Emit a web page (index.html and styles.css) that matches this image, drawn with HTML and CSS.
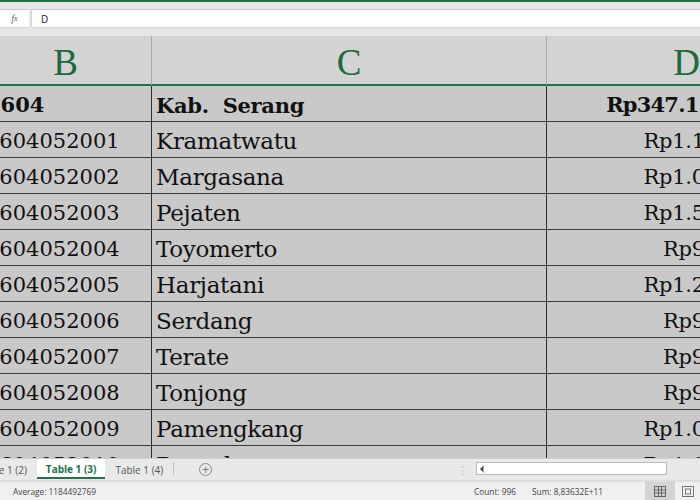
FILE: index.html
```html
<!DOCTYPE html>
<html>
<head>
<meta charset="utf-8">
<link rel="stylesheet" href="styles.css">
</head>
<body>
<div class="app">
  <div class="topband"></div>
  <div class="formula">
    <div class="fx">f<span class="x">x</span></div>
    <div class="field">D</div>
  </div>
  <div class="gap"></div>
  <div class="sheet">
    <div class="grid">
      <div class="hd">B</div><div class="hd">C</div><div class="hd">D</div>
      <div class="c b bold">3604</div><div class="c t bold">Kab.&nbsp; Serang</div><div class="c n bold">Rp347.153.248.000</div>
      <div class="c b">3604052001</div><div class="c t">Kramatwatu</div><div class="c n">Rp1.123.456.000</div>
      <div class="c b">3604052002</div><div class="c t">Margasana</div><div class="c n">Rp1.045.873.000</div>
      <div class="c b">3604052003</div><div class="c t">Pejaten</div><div class="c n">Rp1.512.904.000</div>
      <div class="c b">3604052004</div><div class="c t">Toyomerto</div><div class="c n">Rp978.312.000</div>
      <div class="c b">3604052005</div><div class="c t">Harjatani</div><div class="c n">Rp1.256.640.000</div>
      <div class="c b">3604052006</div><div class="c t">Serdang</div><div class="c n">Rp965.221.000</div>
      <div class="c b">3604052007</div><div class="c t">Terate</div><div class="c n">Rp951.084.000</div>
      <div class="c b">3604052008</div><div class="c t">Tonjong</div><div class="c n">Rp987.530.000</div>
      <div class="c b">3604052009</div><div class="c t">Pamengkang</div><div class="c n">Rp1.034.118.000</div>
      <div class="c b">3604052010</div><div class="c t">Pancalaran</div><div class="c n">Rp1.142.760.000</div>
    </div>
  </div>
  <div class="tabs">
    <div class="tab">Table 1 (2)</div>
    <div class="tab active">Table 1 (3)</div>
    <div class="tab">Table 1 (4)</div>
    <div class="tsep"></div>
    <div class="plus">+</div>
    <div class="dots">⋮</div>
    <div class="hscroll"><span class="arrow"></span></div>
  </div>
  <div class="status">
    <span class="avg">Average: 1184492769</span>
    <span class="cnt">Count: 996</span>
    <span class="sum">Sum: 8,83632E+11</span>
    <div class="views">
      <div class="view on">
        <svg width="12" height="11" viewBox="0 0 12 11"><g fill="none" stroke="#666" stroke-width="1"><rect x="0.5" y="0.5" width="11" height="10"/><path d="M4.5 0.5V10.5M7.5 0.5V10.5M0.5 4H11.5M0.5 7H11.5"/></g></svg>
      </div>
      <div class="view">
        <svg width="12" height="11" viewBox="0 0 12 11"><g fill="none" stroke="#777" stroke-width="1"><rect x="0.5" y="0.5" width="11" height="10"/><rect x="3.5" y="3" width="5" height="5"/></g></svg>
      </div>
    </div>
  </div>
</div>
</body>
</html>
```
FILE: styles.css
```css
* { box-sizing: border-box; }
html, body { margin: 0; padding: 0; }
body { width: 700px; height: 500px; overflow: hidden; background: #fff; font-family: "Open Sans", "DejaVu Sans", sans-serif; }
.app { width: 700px; height: 500px; display: flex; flex-direction: column; overflow: hidden; }
.topband { height: 9px; background: #e6e6e6; border-top: 2px solid #217346; flex: none; }
.formula { height: 19px; display: flex; background: #e6e6e6; flex: none; }
.fx { width: 29px; background: #fff; border-top: 1px solid #c6c6c6; border-bottom: 1px solid #d4d4d4; font-family: "Liberation Serif", serif; font-style: italic; font-size: 10px; color: #666; display: flex; align-items: center; justify-content: center; }
.fx .x { font-size: 8px; }
.field { flex: 1; margin-left: 2px; background: #fff; border-top: 1px solid #c6c6c6; border-bottom: 1px solid #d4d4d4; border-left: 1px solid #d4d4d4; font-size: 10px; color: #222; padding-left: 9px; display: flex; align-items: center; }
.gap { height: 8px; background: #e6e6e6; flex: none; }
.sheet { flex: 1; overflow: hidden; background: #c8c8c8; }
.grid { display: grid; grid-template-columns: 172px 395px 280px; grid-template-rows: 50px repeat(11, 36px); margin-left: -20px; width: 847px; }
.hd { background: #d3d3d3; border-right: 1px solid #ababab; border-bottom: 2px solid #217346; color: #1e6b3a; font-family: "Liberation Serif", serif; font-size: 37px; display: flex; align-items: center; justify-content: center; padding-top: 4px; }
.c { background: #c9c9c9; border-right: 1px solid #2f2f2f; border-bottom: 1px solid #3a3a3a; font-family: "DejaVu Serif", serif; font-size: 21px; color: #111; display: flex; align-items: center; padding: 2px 4px 0 4px; white-space: nowrap; overflow: hidden; letter-spacing: -0.3px; }
.c.t { font-size: 23px; padding-top: 3px; }
.c.bold { font-weight: bold; font-size: 21px; }
.c.b { justify-content: flex-start; padding-left: 6px; letter-spacing: 0; }
.c.n { justify-content: flex-end; }
.c.n.bold { letter-spacing: -0.8px; }
.tabs { height: 22px; flex: none; background: #e9e9e9; border-top: 1px solid #d0d0d0; display: flex; align-items: stretch; font-size: 10px; color: #555; }
.tab { padding: 0 10px; display: flex; align-items: center; }
.tab:first-child { margin-left: -31px; }
.tab.active { background: #fff; color: #217346; font-weight: bold; border-bottom: 2px solid #217346; padding: 2px 9px 0 9px; margin-bottom: 1px; }
.tsep { width: 1px; background: #c0c0c0; margin: 3px 0 5px 0; }
.plus { width: 13px; height: 13px; border: 1px solid #8a8a8a; border-radius: 50%; margin: 4px 0 0 25px; display: flex; align-items: center; justify-content: center; font-size: 12px; line-height: 1; color: #777; }
.dots { margin-left: 245px; color: #bbb; font-size: 11px; display: flex; align-items: center; }
.hscroll { margin: 3px 0 5px 8px; width: 191px; background: #fff; border: 1px solid #bcbcbc; position: relative; }
.arrow { position: absolute; left: 3px; top: 3px; width: 0; height: 0; border-top: 3px solid transparent; border-bottom: 3px solid transparent; border-right: 3px solid #444; }
.arrow::after { content: ""; position: absolute; left: 3px; top: -4px; width: 1px; height: 8px; background: #aaa; }
.status { height: 20px; flex: none; background: #f0f0f0; border-top: 2px solid #dcdcdc; display: flex; align-items: center; font-size: 8.3px; color: #444; }
.avg { margin-left: 13px; width: 461px; }
.cnt { width: 58px; }
.views { margin-left: auto; display: flex; align-self: stretch; }
.view { width: 30px; display: flex; align-items: center; justify-content: center; }
.view.on { background: #d4d4d4; }
.view:last-child { width: 25px; }
```
